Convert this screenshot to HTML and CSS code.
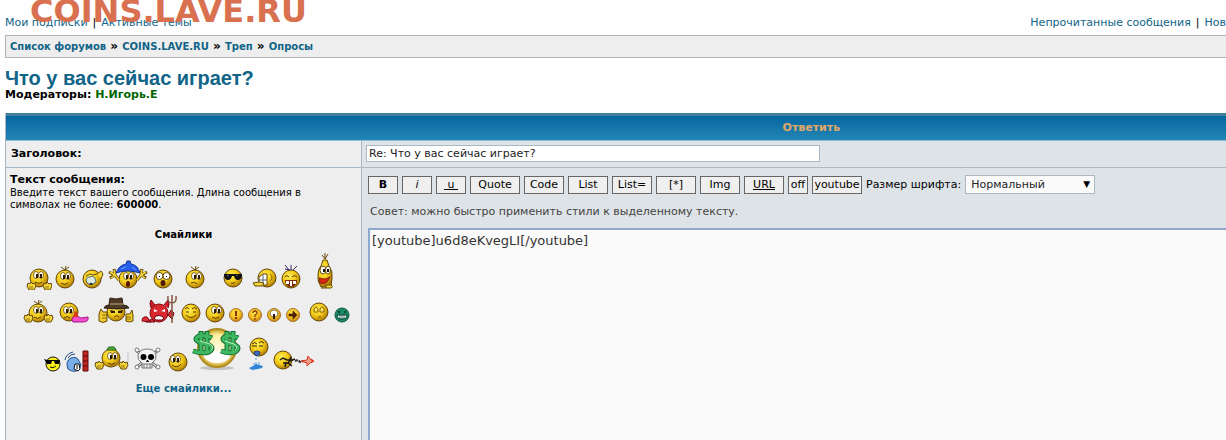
FILE: index.html
```html
<!DOCTYPE html>
<html lang="ru">
<head>
  <meta charset="UTF-8" />
  <meta name="viewport" content="width=device-width, initial-scale=1" />
  <title>Что у вас сейчас играет? - Ответить</title>
  <link rel="stylesheet" href="styles.css">
</head>
<body>
  <!-- Shared smiley parts -->
  <svg class="defs" width="0" height="0" aria-hidden="true">
    <defs>
      <radialGradient id="yellow" cx="40%" cy="35%" r="65%">
        <stop offset="0" stop-color="#fff05a" />
        <stop offset="0.55" stop-color="#f2ca16" />
        <stop offset="1" stop-color="#b07c06" />
      </radialGradient>
      <radialGradient id="orange" cx="45%" cy="35%" r="65%">
        <stop offset="0" stop-color="#ffe84a" />
        <stop offset="0.6" stop-color="#f2bc22" />
        <stop offset="1" stop-color="#c07a10" />
      </radialGradient>
      <radialGradient id="gold-ring" cx="50%" cy="50%" r="50%">
        <stop offset="0" stop-color="#fffbe0" />
        <stop offset="0.7" stop-color="#fdf0a0" />
        <stop offset="1" stop-color="#c39a1c" />
      </radialGradient>
      <g id="face"><circle r="9" fill="url(#yellow)" stroke="#664808" /></g>
      <g id="coin"><circle r="6.5" fill="url(#orange)" stroke="#a8742a" /></g>
      <g id="eyes">
        <ellipse cx="-2" cy="-3" rx="2.5" ry="3.5" fill="#fff" stroke="#664808" stroke-width="0.8" />
        <ellipse cx="3" cy="-3" rx="2.5" ry="3.5" fill="#fff" stroke="#664808" stroke-width="0.8" />
        <path d="M-2-4h2v4h-2zM2-4h2v4H2z" fill="#2a1a00" />
      </g>
      <g id="hair"><path d="M-4-12l4 3 1-4M0-9l4-3" fill="none" stroke="#664808" /></g>
      <g id="hand">
        <path d="M-4 0l1-3 2 1 1-2 2 2 2-1 1 3-2 4h-5z" fill="#f7d83a" stroke="#664808" />
        <path d="M-1 0v3M1 0v3" stroke="#664808" stroke-width="0.7" />
      </g>
      <g id="smile"><path d="M-4 4q4 3 7 0" fill="none" stroke="#5a3a00" /></g>
    </defs>
  </svg>

  <div class="page">
    <div class="logo">COINS.LAVE.RU</div>

    <!-- Top links -->
    <div class="toplinks">
      <div class="links"><a href="#">Мои подписки</a> | <a href="#">Активные темы</a></div>
      <div class="links"><a href="#">Непрочитанные сообщения</a> | <a href="#">Нов</a></div>
    </div>

    <div class="crumbs">
      <a href="#">Список форумов</a> »
      <a href="#">COINS.LAVE.RU</a> »
      <a href="#">Треп</a> »
      <a href="#">Опросы</a>
    </div>

    <h1><a href="#">Что у вас сейчас играет?</a></h1>
    <p class="moderators">Модераторы: <a href="#">Н.Игорь.Е</a></p>

    <form class="postform">
      <h2 class="bar">Ответить</h2>

      <div class="cell side"><label class="name" for="subject">Заголовок:</label></div>
      <div class="cell main subject">
        <input type="text" id="subject" value="Re: Что у вас сейчас играет?">
      </div>

      <div class="cell side message-info">
        <label class="name" for="message">Текст сообщения:</label>
        <p class="hint">Введите текст вашего сообщения. Длина сообщения в символах не более: <b>600000</b>.</p>

        <h3>Смайлики</h3>
        <div class="smilies">
          <div class="smilies-row">
            <svg width="26" height="38" viewBox="-13 -27 26 38"><use href="#face" y="-1" /><use href="#eyes" x="-1" y="-1" /><use href="#smile" y="-1" /><use href="#hand" x="-8" y="7" /><use href="#hand" x="8" y="7" /></svg>
            <svg width="26" height="38" viewBox="-13 -27 26 38"><use href="#face" /><use href="#hair" /><use href="#eyes" /><use href="#smile" /></svg>
            <svg width="28" height="38" viewBox="-14 -27 28 38"><use href="#face" /><path d="M-6-3l4-2 3 1 4-1" stroke="#664808" fill="none" /><path d="M-6 1q1-4 4-3 3-2 5 1l1 4q-5 4-9 1z" fill="#dfe9e4" stroke="#4c6b65" /><path d="M-3 6q2-5 4 0z" fill="#30393a" /><path d="M5-5l4-3 2 3-2 5" fill="#f7d83a" stroke="#664808" /></svg>
            <svg width="43" height="38" viewBox="-22 -27 43 38"><use href="#face" /><use href="#eyes" /><ellipse cy="5" rx="2" ry="3" fill="#5a1408" /><path d="M-12-6q3-8 10-9l1-3h3l1 3q7 1 9 9-6-2-12-2-7 0-12 2z" fill="#275ee8" stroke="#123592" /><path d="M-7-10l5-2M4-12l4 3" stroke="#6f9dff" /><g fill="none" stroke="#664808" stroke-width="3"><path d="M-9 1l-4-5-5 3M-13-4l-6-3M-13-4l-1-6M9 1l4-5 5 3M13-4l6-3M13-4l1-6" /></g><g fill="none" stroke="#f7d83a" stroke-width="1.5"><path d="M-9 1l-4-5-4 3M-13-4l-5-3M-13-4l-1-5M9 1l4-5 4 3M13-4l5-3M13-4l1-5" /></g></svg>
            <svg width="28" height="38" viewBox="-14 -27 28 38"><use href="#face" /><circle cx="-3.5" cy="-3" r="3.5" fill="#fff" stroke="#664808" /><circle cx="3.5" cy="-3" r="3.5" fill="#fff" stroke="#664808" /><path d="M-4-3h1v1h-1zM3-3h1v1H3z" fill="#000" /><ellipse cy="4" rx="2.5" ry="3" fill="#4b1b05" /></svg>
            <svg width="36" height="38" viewBox="-18 -27 36 38"><use href="#face" /><use href="#hair" /><use href="#eyes" x="1" /><path d="M-4 4q4-2 6 1" stroke="#5a3a00" fill="none" /></svg>
            <svg width="38" height="38" viewBox="-20 -27 38 38"><use href="#face" y="-1" /><path d="M-9-5H9v2q-1 4-4 4T1-3H-1q-1 4-4 4t-4-4z" fill="#111" /><path d="M-6-3l2-1M3-3l2-1" stroke="#667" /><path d="M-2 4q3 1 4-1" stroke="#5a3a00" fill="none" /></svg>
            <svg width="28" height="38" viewBox="-16 -27 28 38"><use href="#face" y="-1" /><path d="M-8-2l4-3h4v11h-6q-3-3-2-8z" fill="#fff" stroke="#664808" /><path d="M-8 1h8M-4-5v11" stroke="#5d6270" /><path d="M3-5q4 3 0 7" stroke="#8a5c08" fill="none" /><path d="M-14 4l6-1 5 1-2 3h-7z" fill="#f7d83a" stroke="#664808" /></svg>
            <svg width="32" height="38" viewBox="-12 -27 32 38"><use href="#face" /><path d="M-6-14l4 5M0-9v-5M2-9l4-4M-1-9l-5-1" stroke="#3d2a74" fill="none" /><path d="M-6-2q2-3 4 0M1-2q2-3 5 0" stroke="#5a3a00" fill="none" /><path d="M-6 1H6q0 7-6 7t-6-7z" fill="#7a2b08" /><path d="M-5 2h3v3h-3zM-1 2h2v5h-2zM2 2h3v3H2z" fill="#fff" /></svg>
            <svg width="31" height="38" viewBox="-14 -27 31 38"><path d="M-3-24l3 4 3-5M0-20v-6" stroke="#664808" fill="none" /><path d="M-2-19h4l2 6q4 5 3 12l-1 9h-10q-4-6-3-12 0-6 3-9z" fill="url(#yellow)" stroke="#664808" /><ellipse cx="-2" cy="-9" rx="3" ry="4" fill="#fff" stroke="#664808" /><ellipse cx="3" cy="-9" rx="2.5" ry="4" fill="#fff" stroke="#664808" /><path d="M-2-10h2v3h-2zM2-10h2v3H2z" fill="#111" /><path d="M5-2l-5 2-6-1 1 5 4 1 3-2z" fill="#d32613" stroke="#7b1009" stroke-width="0.7" /><path d="M-4 9h10q3-1 0-3H1v3" stroke="#664808" fill="#f7d83a" /></svg>
          </div>
          <div class="smilies-row">
            <svg width="37" height="32" viewBox="-21 -21 37 32"><use href="#face" /><use href="#hair" /><use href="#eyes" /><use href="#smile" /><use href="#hand" x="-10" y="5" /><use href="#hand" x="10" y="5" /></svg>
            <svg width="38" height="32" viewBox="-15 -21 38 32"><use href="#face" y="-1" /><use href="#eyes" x="-1" /><path d="M-5 5q3-3 6 0" stroke="#5a3a00" fill="none" /><path d="M4 4l3-2 3 2 2 1 7-1q1 5-5 5H4q-2-2 0-5z" fill="#f24fce" stroke="#a51587" /><path d="M4 4l2-6 3 2v4z" fill="#d83a17" /></svg>
            <svg width="47" height="32" viewBox="-24 -21 47 32"><use href="#face" y="-1" /><path d="M-6-3l5 1v2h-4zM2-2l5-1-1 3H2z" fill="#2a1a00" /><path d="M-2 4q3-3 5 0" stroke="#5a3a00" fill="none" /><path d="M-12-5q1-3 5-3l1-7q6 2 12 0l1 7q5 0 6 3-12 2-25 0z" fill="#4d3a27" stroke="#2a1d10" /><path d="M-6-9H7" stroke="#8a7355" stroke-width="2" /><path d="M-17 1l2-5 2 3h4v9q-4 3-8 0zM10 1h4l2-4 1 5v6q-4 2-7 0z" fill="#eecb2c" stroke="#664808" /><path d="M-14 2h5M-14 5h5M10 4h5M10 6h5" stroke="#664808" stroke-width="0.7" /></svg>
            <svg width="40" height="32" viewBox="-21 -21 40 32"><path d="M-9-5q-2-5 0-8l4 5M4-8l4-5q2 5 0 8" fill="#d51c24" stroke="#7b0710" /><circle r="9" cx="-1" fill="#d92730" stroke="#7b0710" /><path d="M-6-4l4 2-4 1zM5-4L1-2l4 1z" fill="#fff" /><path d="M-6 5q5-5 10 0l-2 2h-6z" fill="#fff" stroke="#6b0710" /><path d="M-18 8q0-5 5-4l4 5zM-8 6l-6 3h9zM8 2l3-5 3 3-2 6z" fill="#e2303a" stroke="#7b0710" /><path d="M12-18v28M8-17q-1 7 4 7t4-7" stroke="#855441" stroke-width="1.5" fill="none" /></svg>
            <svg width="24" height="32" viewBox="-12 -21 24 32"><use href="#face" /><path d="M-6-4q2-3 4 0M1-4q2-3 5 0M-5-1h3M2-1h3" stroke="#5a3a00" fill="none" /><path d="M-5 2q5 5 10 0" stroke="#5a3a00" fill="none" /></svg>
            <svg width="24" height="32" viewBox="-12 -21 24 32"><use href="#face" /><use href="#eyes" x="1" /><use href="#smile" x="1" /></svg>
            <svg width="19" height="18" viewBox="-9 -9 19 18"><use href="#coin" /><path d="M-1-4h2v5h-2zM-1 2h2v2h-2z" fill="#8a2c08" /></svg>
            <svg width="19" height="18" viewBox="-9 -9 19 18"><use href="#coin" /><path d="M-2-2q0-2 2-2t2 2q0 1-2 2v2M0 3v2" stroke="#8a3c08" stroke-width="1.3" fill="none" /></svg>
            <svg width="19" height="18" viewBox="-9 -9 19 18"><use href="#coin" /><path d="M-4-1a4 4 0 018 0q0 2-3 3h-2q-3-1-3-3z" fill="#fff" stroke="#664808" stroke-width="0.7" /><path d="M-1-1h2v5h-2z" fill="#2a1a00" /></svg>
            <svg width="19" height="18" viewBox="-9 -9 19 18"><use href="#coin" /><path d="M-4-1H0v-3l4 4-4 4V1h-4z" fill="#4d1f04" stroke="#4d1f04" stroke-width="0.7" /></svg>
            <svg width="30" height="32" viewBox="-16 -21 30 32"><use href="#face" y="-1" /><path d="M-5-1v-3q2-4 4 0v3zM1-1v-3q2-4 4 0v3zM-1 4h3" stroke="#8a5c08" fill="#ffe95a" /></svg>
            <svg width="18" height="18" viewBox="-9 -9 18 18"><circle r="7" fill="#168a66" stroke="#0b5841" /><path d="M-4-3h2M2-3h2" stroke="#042f21" stroke-width="1.5" /><path d="M-5 0H5q0 4-5 4t-5-4z" fill="#fff" stroke="#06402e" /><path d="M-2 0v4M0 0v4M2 0v4" stroke="#06402e" stroke-width="0.7" /></svg>
          </div>
          <div class="smilies-row">
            <svg width="21" height="18" viewBox="-10 -10 21 18"><circle r="7" fill="#f8f018" stroke="#111" /><path d="M-9-5l3 1H7L6 0H2L1-3-1-3-2 0h-4z" fill="#000" /><path d="M-3 3q3 2 6-1" stroke="#111" fill="none" /></svg>
            <svg width="28" height="22" viewBox="-11 -13 28 22"><path d="M-7 6q-3-8 3-11 6-2 8 3l2 4-2 5q-6 3-11-1z" fill="#78aee9" stroke="#1d4e92" /><path d="M-10-3q1-6 8-8M-7-5q2-4 7-4" stroke="#234a80" fill="none" /><path d="M-1 6l1-5h4l1 5-2 2z" fill="#fff" stroke="#111" /><path d="M2 2v4" stroke="#111" /><path d="M8-12h5v20H8z" fill="#c22420" stroke="#5c0d0c" /><path d="M8-7h5M8-2h5M8 3h5" stroke="#5c0d0c" /></svg>
            <svg width="39" height="32" viewBox="-19 -18 39 32"><path d="M17-6V5M9 5h8" stroke="#c4c4c4" /><use href="#face" /><path d="M-4-8q1-4 4-3 4-1 5 3z" fill="#4fae3d" stroke="#23651a" /><use href="#eyes" x="1" y="1" /><use href="#smile" x="1" y="1" /><use href="#hand" x="-12" y="7" /><use href="#hand" x="12" y="7" /><path d="M-9 8l3-2M9 8L6 6" stroke="#b98208" stroke-width="2" /></svg>
            <svg width="34" height="28" viewBox="-16 -15 34 28"><path d="M-10-8l20 16M10-8L-10 8" stroke="#777" stroke-width="3" /><path d="M-9-7L9 7M9-7L-9 7" stroke="#fff" /><g fill="#fff" stroke="#777"><circle cx="-10" cy="-9" r="2" /><circle cx="11" cy="-9" r="2" /><circle cx="-10" cy="8" r="2" /><circle cx="11" cy="8" r="2" /></g><path d="M-5 4q-5-3-4-8 2-6 9-6 8 0 9 6 1 5-4 8v5h-10z" fill="#f3f3f3" stroke="#777" /><ellipse cx="-3.5" cy="-2" rx="3" ry="3" /><ellipse cx="4" cy="-2" rx="3" ry="3" /><path d="M0 1l-1 2h3L1 1z" /><path d="M-3 5v4M0 5v4M3 5v4M-5 5H5" stroke="#777" /></svg>
            <svg width="26" height="24" viewBox="-13 -14 26 24"><use href="#face" /><use href="#eyes" x="-3" /><path d="M-6 3q5 4 9-1" stroke="#5a3a00" fill="none" /></svg>
            <svg width="52" height="46" viewBox="-26 -22 52 46"><ellipse cy="20" rx="17" ry="2" fill="#c4c4c4" /><circle r="19" fill="url(#gold-ring)" stroke="#b08e26" stroke-width="2" /><path d="M-15 1q15 4 30 0-1 14-15 14T-15 1z" fill="#fff" /><g fill="none" stroke="#0d6e32" stroke-width="5"><path d="M-5-10q-5-3-13-2-6 3 0 6l10 3q6 3 0 7-7 2-16-1M-16-17V6M-10-17V6" /><path d="M21-10q-5-3-12-2-6 3 0 6l9 3q6 3 0 7-6 2-14-1M10-17V6M16-17V6" /></g><g fill="none" stroke="#3fb861" stroke-width="3"><path d="M-16-16V5M-10-16V5M10-16V5M16-16V5" /><path d="M-5-10q-5-3-13-2-6 3 0 6l10 3q6 3 0 7-7 2-16-1" /><path d="M21-10q-5-3-12-2-6 3 0 6l9 3q6 3 0 7-6 2-14-1" /></g><path d="M-17-7l10 3q5 3 1 6M8-7l9 3q5 3 1 6" fill="none" stroke="#b8f0c0" /></svg>
            <svg width="30" height="36" viewBox="-16 -11 30 36"><use href="#face" /><path d="M-7-3q3-3 5 0M0-4q2-3 5 0M-7-1h5M0-1h4" stroke="#3a2500" fill="none" /><path d="M-5 5q3-2 6 0l-1 3q-2 2-4 0z" fill="#3d6cc0" stroke="#243f7a" /><path d="M-3 11v2M-3 15v3M-5 16v2M0 15v3" stroke="#5a9fe0" /><path d="M-10 21l4-2 3-2 3 1 4 1-1 2-4 1-6 1z" fill="#2f86d8" /></svg>
            <svg width="51" height="24" viewBox="-10 -12 51 24"><use href="#face" /><path d="M-3 0l3-2 4 2h5M0 3h5l4 3M3 2l-1 5M8-3L5 4M7 1l5-2" stroke="#1c1a12" stroke-width="1.5" fill="none" /><path d="M12 1l3-1 2 2 3-1 3 1" stroke="#333" stroke-width="2" stroke-dasharray="3 1" fill="none" /><path d="M18 1l6-1 1-4 2 3 3 2-3 2-3 3v-3zM28-1l3 2-3 2" fill="#f59a83" stroke="#d93a22" /></svg>
          </div>
        </div>
        <a class="more" href="#">Еще смайлики...</a>
      </div>

      <div class="cell main message">
        <div class="toolbar">
          <button type="button" class="w30"><b>B</b></button>
          <button type="button" class="w30"><i>i</i></button>
          <button type="button" class="w30"><u>&nbsp;u&nbsp;</u></button>
          <button type="button" class="w50">Quote</button>
          <button type="button" class="w40">Code</button>
          <button type="button" class="w40">List</button>
          <button type="button" class="w40">List=</button>
          <button type="button" class="w40">[*]</button>
          <button type="button" class="w40">Img</button>
          <button type="button" class="w40"><u>URL</u></button>
          <button type="button" class="w20">off</button>
          <button type="button" class="w50">youtube</button>
          <label for="fontsize">Размер шрифта:</label>
          <span class="select">
            <select id="fontsize"><option>Нормальный</option></select>
          </span>
        </div>
        <p class="tip">Совет: можно быстро применить стили к выделенному тексту.</p>
        <textarea id="message" spellcheck="false">[youtube]u6d8eKvegLI[/youtube]</textarea>
      </div>
    </form>
  </div>

  <script>
    // Put the cursor after the inserted tag
    const message = document.getElementById('message');
    message.focus();
    message.setSelectionRange(message.value.length, message.value.length);
  </script>
</body>
</html>
```
FILE: styles.css
```css
* {
  margin: 0;
  padding: 0;
  box-sizing: border-box;
}

body {
  background: #fefefe;
  color: #000;
  font-family: Verdana, 'DejaVu Sans', sans-serif;
  font-size: 11px;
  line-height: 14px;
}

a {
  color: #106488;
  text-decoration: none;
}

a:hover {
  text-decoration: underline;
}

input, select, textarea, button {
  font-family: inherit;
  font-size: 11px;
  color: #222;
}

.defs {
  position: absolute;
}

.page {
  position: relative;
  display: flex;
  flex-direction: column;
  height: 100vh;
  padding: 16px 0 0 5px;
  overflow: hidden;
}

.logo {
  position: absolute;
  top: -9px;
  left: 30px;
  color: #d9704f;
  font-size: 32px;
  font-weight: bold;
  line-height: 40px;
}

.toplinks {
  display: flex;
  justify-content: space-between;
  white-space: nowrap;
  margin-bottom: 5px;
}

.links {
  display: flex;
  gap: 5px;
}

.crumbs {
  border: 1px solid #b0b4b8;
  border-right: none;
  background: #eee;
  padding: 3px 4px;
  font-size: 12px;
  font-weight: bold;
}

.crumbs a {
  font-size: 10px;
}

h1 {
  margin-top: 10px;
  font-family: 'Liberation Sans', Arial, sans-serif;
  font-size: 20px;
  line-height: 21px;
}

.moderators {
  line-height: 12px;
  font-weight: bold;
}

.moderators a {
  color: #060;
}

.postform {
  flex: 1;
  display: grid;
  grid-template-columns: 356px 1fr;
  grid-template-rows: auto auto 1fr;
  width: 132%;
  margin-top: 12px;
  border-left: 1px solid #a9b8c2;
}

.bar {
  grid-column: 1 / 3;
  border-top: 3px solid #40829c;
  border-bottom: 1px solid #8fbcd6;
  background: linear-gradient(#0666a1, #2486b5);
  color: #e0a868;
  font-size: 11px;
  line-height: 24px;
  text-align: center;
}

.cell {
  border-bottom: 1px solid #a9b8c2;
}

.side {
  border-right: 1px solid #a9b8c2;
  background: #eee;
  padding: 6px 5px;
}

.main {
  background: #dee3e7;
  padding: 4px;
}

.name {
  font-weight: bold;
}

.subject input {
  display: block;
  width: 454px;
  height: 17px;
  border: 1px solid #a9b8c2;
  background: #fff;
  padding: 0 2px;
}

.message-info {
  padding: 5px 4px;
}

.hint {
  padding-right: 36px;
  font-size: 10px;
  line-height: 12px;
}

h3 {
  margin-top: 17px;
  font-size: 10px;
  line-height: 14px;
  text-align: center;
}

.smilies {
  display: flex;
  flex-direction: column;
  gap: 2px;
  margin-top: 10px;
}

.smilies-row {
  display: flex;
  justify-content: center;
  align-items: flex-end;
}

.smilies-row svg {
  flex: none;
}

.more {
  display: block;
  margin-top: 10px;
  font-size: 10px;
  font-weight: bold;
  text-align: center;
}

.message {
  display: flex;
  flex-direction: column;
  padding: 7px 0 0 6px;
}

.toolbar {
  display: flex;
  align-items: center;
  gap: 4px;
}

.toolbar button {
  height: 18px;
  border: 1px solid #666;
  background: #efefef;
  color: #000;
  line-height: 16px;
  white-space: nowrap;
  display: flex;
  justify-content: center;
}

.w20 { width: 20px; }
.w30 { width: 30px; }
.w40 { width: 40px; }
.w50 { width: 50px; }

.select {
  position: relative;
}

.select::after {
  content: '▼';
  position: absolute;
  right: 5px;
  top: 2px;
  font-size: 9px;
  pointer-events: none;
}

select {
  appearance: none;
  display: block;
  width: 130px;
  height: 19px;
  border: 1px solid #a9b8c2;
  background: #fafafa;
  padding-left: 5px;
}

.tip {
  margin: 11px 2px 9px;
  color: #444;
}

textarea {
  flex: 1;
  min-height: 240px;
  width: 100%;
  border: 2px solid #8fa8d0;
  background: #fafafa;
  padding: 2px;
  color: #333;
  font-size: 13px;
  line-height: 17px;
  outline: none;
  resize: none;
}
```
